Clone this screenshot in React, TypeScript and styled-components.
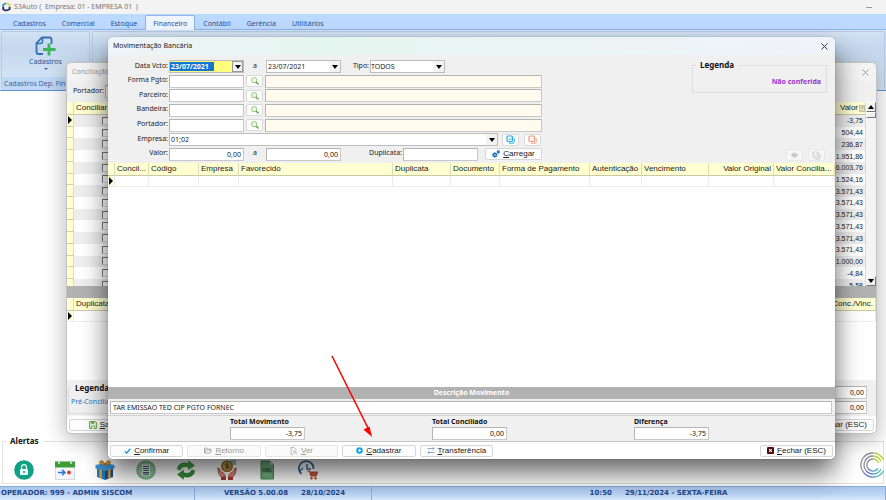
import React from "react";
import styled, { createGlobalStyle } from "styled-components";

const tahoma = `"Noto Sans", "Open Sans", sans-serif`;
const verdana = `"DejaVu Sans", sans-serif`;
const arial = `"Liberation Sans", Arial, sans-serif`;

const Global = createGlobalStyle`
  *, *::before, *::after { box-sizing: border-box; }
  body { margin: 0; background: #fff; font-family: ${tahoma}; font-size: 7px; line-height: 10px; color: #222; }
  button, input, select { font: inherit; color: inherit; margin: 0; padding: 0; }
  svg { display: block; flex: none; }
`;

const Desktop = styled.div`
  position: relative;
  min-height: 100vh;
  display: flex;
  flex-direction: column;
  overflow: hidden;
`;

/* ---------- main application frame ---------- */
const AppTitle = styled.header`
  display: flex;
  align-items: center;
  gap: 3px;
  height: 14px;
  padding: 0 14px 0 2px;
  background: #f3f3f3;
  color: #777;
  white-space: pre;
`;
const MinimizeMark = styled.button`
  margin-left: auto;
  width: 6px;
  height: 1px;
  border: 0;
  background: #999;
`;
const TabBar = styled.nav`
  display: flex;
  height: 16px;
  background: #bcd9ff;
  padding: 1px 0 0 5px;
  border-bottom: 1px solid #8fb5e6;
`;
const Tab = styled.a<{ $active?: boolean }>`
  height: 15px;
  line-height: 15px;
  padding: 0 7px;
  color: #2f4f8a;
  text-decoration: none;
  border: 1px solid ${(p) => (p.$active ? "#8fb5e6" : "transparent")};
  border-bottom: 0;
  border-radius: 2px 2px 0 0;
  background: ${(p) => (p.$active ? "#eef5ff" : "transparent")};
`;
const Ribbon = styled.section`
  display: flex;
  gap: 2px;
  height: 61px;
  padding: 1px 1px 0;
  background: linear-gradient(#d5e3f4, #c5d8ee 30%, #cfe1f4 70%, #d9e9f9);
  border-bottom: 1px solid #5f93d4;
`;
const RibbonGroup = styled.div<{ $wide?: boolean }>`
  display: flex;
  flex-direction: column;
  flex: ${(p) => (p.$wide ? "1" : "0 0 89px")};
  border: 1px solid #b4cae6;
  border-bottom: 0;
  border-radius: 2px;
  color: #2f4f8a;
  overflow: hidden;
`;
const RibbonButton = styled.button`
  display: flex;
  flex-direction: column;
  align-items: center;
  gap: 1px;
  flex: 1;
  padding: 4px 0 0;
  border: 0;
  background: transparent;
`;
const RibbonCaption = styled.div`
  padding: 0 2px;
  height: 13px;
  line-height: 13px;
  background: #bed8f5;
  white-space: nowrap;
  color: #3f66a6;
`;
const Workspace = styled.main`
  flex: 1;
`;
const AlertBox = styled.fieldset`
  margin: 0 2px 2px;
  padding: 4px 0 3px 3px;
  height: 48px;
  border: 1px solid #e2e2e2;
  display: flex;
  justify-content: space-between;
`;
const BoldLegend = styled.legend`
  font: bold 8px/10px ${tahoma};
  color: #111;
  padding: 0 4px;
`;
const AlertList = styled.div`
  display: flex;
  flex: 0 0 312px;
  justify-content: space-between;
  align-items: center;
  padding: 10px 0 0 8px;
`;
const AlertButton = styled.button`
  width: 20px;
  height: 20px;
  border: 0;
  background: transparent;
`;
const BrandMark = styled.div`
  padding-top: 2px;
  margin-right: -3px;
`;
const StatusBar = styled.footer`
  display: grid;
  grid-template-columns: 22fr 20fr 58fr;
  height: 14px;
  border-top: 1px solid #8aa9d3;
  background: linear-gradient(#a9c6ef, #b9d3f5 50%, #d8e8fb);
  color: #1e4689;
  font: bold 7px/13px ${verdana};
`;
const StatusCell = styled.div<{ $align?: string }>`
  display: flex;
  gap: 13px;
  justify-content: ${(p) => p.$align || "flex-start"};
  padding: ${(p) => (p.$align === "center" ? "0 0 0 60px" : "0 26px 0 1px")};
  border-right: 1px solid #90acd6;
  white-space: nowrap;
`;

/* ---------- windows ---------- */
const BackWindow = styled.section`
  position: absolute;
  left: 66px;
  right: 9px;
  top: 62px;
  bottom: 66px;
  display: flex;
  flex-direction: column;
  background: #f0f0f0;
  border: 1px solid #c4c4c4;
  border-radius: 5px;
  overflow: hidden;
  box-shadow: 0 6px 22px rgba(0, 0, 0, 0.3);
`;
const FrontWindow = styled.section`
  position: absolute;
  left: 108px;
  right: 51px;
  top: 37px;
  bottom: 41px;
  display: flex;
  flex-direction: column;
  background: #f0f0f0;
  border-radius: 5px;
  box-shadow: 0 0 1px rgba(0, 0, 0, 0.6), 0 14px 26px rgba(0, 0, 0, 0.6);
`;
const WindowTitle = styled.header<{ $muted?: boolean }>`
  display: flex;
  align-items: center;
  justify-content: space-between;
  flex: none;
  height: 18px;
  padding: 0 7px 0 5px;
  border-radius: 5px 5px 0 0;
  background: ${(p) => (p.$muted ? "#f3f3f3" : "linear-gradient(90deg, #eff4f8, #e5f5ef 30%, #eaf4f4 60%, #f0f3f9)")};
  color: ${(p) => (p.$muted ? "#999" : "#222")};
`;
const CloseButton = styled.button`
  width: 7px;
  height: 7px;
  border: 0;
  background: transparent;
`;

/* ---------- form ---------- */
const FormArea = styled.div`
  display: flex;
  flex: none;
  justify-content: space-between;
  height: 108px;
  padding: 5px 8px 2px 0;
`;
const Fields = styled.div`
  flex: 0 1 434px;
  display: flex;
  flex-direction: column;
  justify-content: space-between;
`;
const FieldRow = styled.div`
  display: flex;
  align-items: center;
  height: 13px;
`;
const Label = styled.label<{ $w: number }>`
  flex: 0 0 ${(p) => p.$w}px;
  padding-right: 1px;
  text-align: right;
  white-space: nowrap;
  height: 12px;
`;
const Between = styled.span`
  flex: 0 0 22px;
  text-align: center;
  height: 12px;
`;
const TextBox = styled.input<{ $grow?: boolean; $tint?: boolean; $num?: boolean }>`
  flex: ${(p) => (p.$grow ? "1 1 0" : "0 0 75px")};
  min-width: 0;
  width: 75px;
  height: 13px;
  padding: 0 2px;
  border: 1px solid #bdbdbd;
  border-color: #b4b4b4 #c8c8c8 #c8c8c8 #b4b4b4;
  border-radius: 0;
  background: ${(p) => (p.$tint ? "#fffbee" : "#fff")};
  text-align: ${(p) => (p.$num ? "right" : "left")};
`;
const Combo = styled.div<{ $grow?: boolean; $focus?: boolean }>`
  display: flex;
  align-items: center;
  flex: ${(p) => (p.$grow ? "1 1 0" : "0 0 75px")};
  height: 13px;
  border: 1px solid #bdbdbd;
  background: ${(p) => (p.$focus ? "#ffff7d" : "#fff")};
`;
const ComboInput = styled.input<{ $selected?: boolean }>`
  flex: ${(p) => (p.$selected ? "0 0 44px" : "1 1 0")};
  min-width: 0;
  width: 44px;
  height: 9px;
  border: 0;
  padding-left: 1px;
  background: ${(p) => (p.$selected ? "#1377d3" : "transparent")};
  color: ${(p) => (p.$selected ? "#fff" : "#222")};
  font-weight: ${(p) => (p.$selected ? "bold" : "normal")};
  outline: 0;
`;
const ComboSelect = styled.select`
  appearance: none;
  flex: 1;
  min-width: 0;
  height: 11px;
  border: 0;
  background: transparent;
`;
const DropButton = styled.button<{ $framed?: boolean }>`
  display: grid;
  place-items: center;
  width: 11px;
  height: 11px;
  margin-left: auto;
  border: ${(p) => (p.$framed ? "1px solid #999" : "0")};
  background: #f3f3f3;
`;
const DropMark = styled.span`
  display: grid;
  place-items: center;
  width: 11px;
  height: 11px;
  background: #f3f3f3;
  pointer-events: none;
`;
const SmallButton = styled.button<{ $gap?: number }>`
  display: grid;
  place-items: center;
  flex: 0 0 17px;
  height: 12px;
  margin: 0 ${(p) => p.$gap ?? 2}px;
  border: 1px solid #dadada;
  border-radius: 2px;
  background: #fdfdfd;
  &:disabled { border-color: #e8e8e8; background: #f6f6f6; }
`;
const ActionButton = styled.button<{ $w?: number }>`
  display: flex;
  align-items: center;
  justify-content: center;
  gap: 3px;
  flex: ${(p) => (p.$w ? `0 0 ${p.$w}px` : "1 1 0")};
  height: 12px;
  border: 1px solid #d6d6d6;
  border-radius: 2px;
  background: #fdfdfd;
  font: 8px/10px ${arial};
  color: #222;
  white-space: nowrap;
  &:disabled { color: #999; border-color: #e6e6e6; background: #fafafa; }
`;
const LoadButton = styled(ActionButton)`
  margin-left: auto;
`;
const SidePanel = styled.div`
  display: flex;
  flex-direction: column;
  justify-content: space-between;
  flex: 0 0 135px;
`;
const LegendBox = styled.fieldset`
  margin: 0;
  padding: 7px 5px 0 3px;
  height: 33px;
  border: 1px solid #dedede;
`;
const LegendItem = styled.div`
  text-align: right;
  font-weight: bold;
  color: #9a30cf;
`;
const SideButtons = styled.div`
  display: flex;
  justify-content: flex-end;
  gap: 1px;
`;

/* ---------- grids ---------- */
const GridSpace = styled.div`
  flex: 1;
  min-height: 0;
  background: #fff;
`;
const DataGrid = styled.table`
  width: 100%;
  table-layout: fixed;
  border-collapse: separate;
  border-spacing: 0;
  font: 8px/10px ${arial};
`;
const HeadCell = styled.th<{ $right?: boolean }>`
  height: 13px;
  padding: ${(p) => (p.$right ? "0 2px 0 0" : "0 0 0 2px")};
  border-right: 1px solid #dcdcb8;
  border-bottom: 1px solid #c9c9a8;
  background: #ffffd0;
  font-weight: normal;
  text-align: ${(p) => (p.$right ? "right" : "left")};
  white-space: nowrap;
`;
const HeadFlex = styled.span`
  display: flex;
  align-items: center;
  justify-content: flex-end;
  gap: 1px;
`;
const Cell = styled.td<{ $mark?: boolean }>`
  height: 11px;
  padding: 0;
  border-right: 1px solid #ececec;
  border-bottom: 1px solid #ececec;
  background: ${(p) => (p.$mark ? "#ffffe0" : "transparent")};
`;
const Band = styled.div`
  flex: none;
  height: 12px;
  line-height: 12px;
  background: #b2b2b2;
  color: #fff;
  text-align: center;
  font-weight: bold;
`;
const Description = styled.div`
  display: flex;
  flex: none;
  padding: 2px 3px 1px 2px;
  border-bottom: 1px solid #d2d2d2;
`;
const Totals = styled.div`
  display: flex;
  flex: none;
  justify-content: center;
  gap: 127px;
  height: 26px;
  padding: 1px 4px 0 0;
  border-bottom: 1px solid #c6c6c6;
`;
const Total = styled.label`
  display: flex;
  flex-direction: column;
  flex: 0 0 75px;
  white-space: nowrap;
  font-weight: bold;
  color: #111;
  input { flex: none; font-weight: normal; }
`;
const Actions = styled.footer`
  display: flex;
  align-items: center;
  justify-content: space-between;
  flex: none;
  height: 17px;
  padding: 0 2px;
  background: #fff;
  border-radius: 0 0 5px 5px;
`;
const ActionGroup = styled.div`
  display: flex;
  flex: 0 0 383px;
  gap: 4px;
`;
const Pointer = styled.svg`
  position: absolute;
  left: 220px;
  bottom: 20px;
  pointer-events: none;
`;

/* ---------- back window parts ---------- */
const HolderRow = styled.div`
  display: flex;
  align-items: center;
  flex: none;
  height: 21px;
  padding-left: 3px;
`;
const ScrollPane = styled.div`
  display: flex;
  flex: 0 0 184px;
  overflow: hidden;
  align-items: stretch;
  background: #fff;
`;
const EntryTable = styled(DataGrid)`
  height: 189px;
  font-size: 7px;
  thead { font-size: 8px; }
`;
const EntryCell = styled.td<{ $odd?: boolean; $mark?: boolean }>`
  padding: 0 2px 0 0;
  line-height: 9px;
  text-align: right;
  border-right: 1px solid #d8d8d8;
  border-bottom: ${(p) => (p.$mark ? "1px solid #cfcfb0" : "0")};
  background: ${(p) => (p.$mark ? "#ffffd0" : p.$odd ? "#eeeeee" : "#fff")};
`;
const Check = styled.input`
  appearance: none;
  display: block;
  width: 8px;
  height: 8px;
  margin-left: 28px;
  border: 1px solid #777;
  border-right-color: #ddd;
  border-bottom-color: #ddd;
  background: #fff;
`;
const ScrollBar = styled.div`
  display: flex;
  flex-direction: column;
  justify-content: space-between;
  flex: 0 0 10px;
  background: #f4f4f4;
`;
const ScrollButton = styled.button`
  display: grid;
  place-items: center;
  width: 10px;
  height: 10px;
  border: 1px solid #fff;
  border-right-color: #777;
  border-bottom-color: #777;
  background: #f0f0f0;
`;
const ScrollThumb = styled(ScrollButton)`
  height: 6px;
`;
const BackFoot = styled.div`
  display: flex;
  flex: none;
  justify-content: space-between;
  height: 36px;
  padding: 3px 9px 2px 1px;
`;
const BackLegend = styled.fieldset`
  flex: 0 0 200px;
  margin: 0;
  padding: 4px 2px;
  border: 1px solid #dcdcdc;
  color: #2a74cf;
`;
const BackTotals = styled.div`
  display: flex;
  flex-direction: column;
  justify-content: flex-end;
  gap: 2px;
  input { flex: none; }
`;

/* ---------- icons ---------- */
const Caret = ({ up }: { up?: boolean }) => (
  <svg width="6" height="4" viewBox="0 0 6 4">
    <path d={up ? "M0 4h6L3 0z" : "M0 0h6L3 4z"} fill="#000" />
  </svg>
);
const MenuCaret = () => (
  <svg width="4" height="2" viewBox="0 0 4 2">
    <path d="M0 0h4L2 2z" fill="#3f66a6" />
  </svg>
);
const FilterMark = () => (
  <svg width="6" height="7" viewBox="0 0 6 7">
    <rect x=".5" y=".5" width="5" height="6" fill="#ece9c4" stroke="#c4c19c" />
    <path d="M1.500 2h3L3 3.800V5.500" fill="none" stroke="#a19e7c" strokeWidth=".8" />
  </svg>
);
const RowMark = () => (
  <svg width="5" height="8" viewBox="0 0 5 8">
    <path d="M1 0l4 4-4 4z" fill="#000" />
  </svg>
);
const Cross = ({ color }: { color: string }) => (
  <svg width="7" height="7" viewBox="0 0 7 7">
    <path d="M.5 .5l6 6M6.500 .5l-6 6" stroke={color} strokeWidth="1" />
  </svg>
);
const Search = () => (
  <svg width="8" height="8" viewBox="0 0 8 8" fill="none">
    <circle cx="3.200" cy="3.200" r="2.600" fill="#eef9e8" stroke="#8cc97a" strokeWidth="1" />
    <path d="M5 5l2.500 2.500" stroke="#5aa548" strokeWidth="1.400" />
  </svg>
);
const Copies = ({ color, tick }: { color: string; tick?: boolean }) => (
  <svg width="9" height="9" viewBox="0 0 9 9" fill="none" stroke={color}>
    <rect x="1" y="1" width="5.500" height="5.500" rx="1" strokeWidth="1.200" />
    <path d="M3 8.200h4.200a1 1 0 0 0 1-1V3" strokeWidth="1" />
    {tick && <path d="M2.500 3.800l1.200 1.200 2-2.400" strokeWidth="1" />}
  </svg>
);
const Gears = () => (
  <svg width="8" height="8" viewBox="0 0 8 8" fill="none" stroke="#2372b8">
    <circle cx="2.800" cy="5" r="1.700" strokeWidth="1.500" />
    <circle cx="6.300" cy="1.900" r="1" strokeWidth="1.100" />
    <path d="M2.800 2.300v5.400M.1 5h5.400M6.300 0v3.800" strokeWidth=".5" />
  </svg>
);
const Bug = () => (
  <svg width="9" height="8" viewBox="0 0 9 8">
    <path d="M1 4q3.500-5 7 0q-3.500 5-7 0z" fill="#c2c2c2" />
    <circle cx="4.500" cy="4" r="1.500" fill="#e6e6e6" />
    <circle cx="4.500" cy="4" r=".8" fill="#999" />
  </svg>
);
const Tick = () => (
  <svg width="7" height="6" viewBox="0 0 7 6">
    <path d="M.8 3.200l1.800 1.900L6.300.8" fill="none" stroke="#159be8" strokeWidth="1.400" />
  </svg>
);
const Folder = () => (
  <svg width="8" height="7" viewBox="0 0 8 7">
    <path d="M.5 6V1h2l.8 1h3v1M.5 6l1.400-3h5.600L6.200 6z" fill="none" stroke="#999" strokeWidth=".8" />
  </svg>
);
const PageFind = () => (
  <svg width="8" height="8" viewBox="0 0 8 8" fill="none" stroke="#aaa" strokeWidth=".8">
    <path d="M3 7.500H1V.5h3l2 2v1" />
    <circle cx="4.700" cy="5" r="1.300" />
    <path d="M5.700 6l1.600 1.600" />
  </svg>
);
const Plus = () => (
  <svg width="7" height="7" viewBox="0 0 7 7">
    <circle cx="3.500" cy="3.500" r="3.300" fill="#1aa3ea" />
    <path d="M3.500 2v3M2 3.500h3" stroke="#fff" strokeWidth="1.200" />
  </svg>
);
const Swap = () => (
  <svg width="8" height="7" viewBox="0 0 8 7">
    <path d="M.5 1.500h6.500M5.500 0l1.700 1.500L5.500 3M7.500 5.500H1M2.500 4L.8 5.500 2.500 7" fill="none" stroke="#6f93c8" strokeWidth=".8" />
  </svg>
);
const Exit = () => (
  <svg width="7" height="7" viewBox="0 0 7 7">
    <rect width="7" height="7" rx="1" fill="#4e0b0e" />
    <path d="M2.200 2.200l2.600 2.600M4.800 2.200L2.200 4.800" stroke="#fff" strokeWidth="1.100" />
  </svg>
);
const Disk = () => (
  <svg width="8" height="8" viewBox="0 0 8 8">
    <path d="M.6.6h6l.8.8v6H.6z" fill="#e9f6e2" stroke="#5ba544" strokeWidth="1" />
    <path d="M2.200.6h3v2.200h-3zM2 4.800h4v2.600H2z" fill="#5ba544" />
    <path d="M2.700 5.400h2.600v2H2.700z" fill="#fff" />
  </svg>
);
const AppIcon = () => (
  <svg width="9" height="10" viewBox="0 0 9 10" fill="none" strokeWidth="1.800">
    <path d="M4 1.200L1.200 2.800V5" stroke="#2f8fd6" />
    <path d="M1.200 5v2.200L4 8.800" stroke="#1d3563" />
    <path d="M4 8.800l3.600-1.600V5" stroke="#1d3563" />
    <path d="M7.600 5V2.800L4.600 1.200" stroke="#e0cf3a" />
  </svg>
);
const AddFile = () => (
  <svg width="21" height="20" viewBox="0 0 21 20" fill="none">
    <path d="M8 18H3.500Q1.500 18 1.500 16V7L7 1.500h7.500q2 0 2 2V8" stroke="#3472b5" strokeWidth="1.800" />
    <path d="M1.500 7.500H5.500Q7.500 7.500 7.500 5.500V1.500" stroke="#3472b5" strokeWidth="1.500" />
    <path d="M14 7.500v12M8 13.500h12.500" stroke="#3fb55d" strokeWidth="2.800" />
  </svg>
);
const LockIcon = () => (
  <svg width="20" height="20" viewBox="0 0 20 20">
    <circle cx="10" cy="10" r="9.800" fill="#12a085" />
    <rect x="6" y="9" width="8" height="6" rx="1" fill="#e8fbf6" />
    <path d="M7.600 9V7a2.400 2.400 0 0 1 4.800 0v2" fill="none" stroke="#e8fbf6" strokeWidth="1.300" />
    <circle cx="10" cy="12" r="1" fill="#12a085" />
  </svg>
);
const CalendarIcon = () => (
  <svg width="20" height="20" viewBox="0 0 20 20">
    <rect x=".5" y="2" width="19" height="17.500" fill="#f4f6fa" stroke="#d4dae4" />
    <path d="M0 1.500h20v6H0z" fill="#3f9c38" />
    <path d="M4 0v4M16 0v4" stroke="#d8ecd6" strokeWidth="1.500" />
    <path d="M3 12.500h6M7 9.800l3 2.700-3 2.700" fill="none" stroke="#2878cf" strokeWidth="1.500" />
    <circle cx="14" cy="12.500" r="2" fill="#e13b38" />
  </svg>
);
const GiftIcon = () => (
  <svg width="20" height="20" viewBox="0 0 20 20">
    <path d="M2 8l8 2v10l-8-3z" fill="#2676b8" />
    <path d="M10 10l8-2v9l-8 3z" fill="#174f86" />
    <path d="M.5 5L10 3l9.500 2v3.500L10 11 .5 8.500z" fill="#3b93d6" />
    <path d="M4.500 9l2.300.6v9.200L4.500 18zM13.200 9.600l2.300-.6v9l-2.300.8z" fill="#d9a53c" />
    <path d="M10 5C6 5 3 3.500 5 1.200S9.500 2 10 5c.5-3 3-6 5-3.800S14 5 10 5z" fill="#d08f2c" stroke="#8b5a15" strokeWidth=".5" />
  </svg>
);
const ListIcon = () => (
  <svg width="20" height="20" viewBox="0 0 20 20">
    <circle cx="10" cy="10" r="9.800" fill="#7bb58b" />
    <circle cx="10" cy="10" r="7.800" fill="#93c7a0" />
    <rect x="6" y="4.500" width="8" height="11" fill="#e5efe8" />
    <path d="M7 6.500h6M7 8.500h6M7 10.500h6M7 12.500h6M7 14.200h6" stroke="#44556b" strokeWidth="1.200" />
  </svg>
);
const RecycleIcon = () => (
  <svg width="20" height="20" viewBox="0 0 20 20">
    <path d="M1.500 9.500C1 4.500 7 1.500 12.500 3.500V.8L18.500 5.500l-6 4.300V7.200C8.500 6 5 7 4.500 10z" fill="#44a548" stroke="#2d7d32" strokeWidth=".5" />
    <path d="M18.500 10.500c.5 5-5.500 8-11 6v2.700L1.500 14.500l6-4.300v2.600c4 1.200 7.500.2 8-2.800z" fill="#339239" stroke="#256c2a" strokeWidth=".5" />
  </svg>
);
const HandsIcon = () => (
  <svg width="20" height="20" viewBox="0 0 20 20">
    <path d="M13 0h6v5h-6z" fill="#8fc0d0" />
    <circle cx="10" cy="6.200" r="6" fill="#8c6e33" />
    <circle cx="10" cy="6.200" r="4.500" fill="#c29b49" />
    <path d="M11.500 4.500q-3-1.200-3 .4t3 1.700-3 1.500M10 3v6.500" fill="none" stroke="#5c4518" strokeWidth=".9" />
    <path d="M.8 8q2-.5 2.200 3l3.500 2q2 1.500 2 4H4.500Q1 15 .8 8zM19.200 8q-2-.5-2.200 3l-3.500 2q-2 1.500-2 4h4Q19 15 19.200 8z" fill="#e08b7b" stroke="#9e3f36" strokeWidth=".8" />
    <path d="M4 17h5v3H4zM11 17h5v3h-5z" fill="#a63a38" />
  </svg>
);
const XmlIcon = () => (
  <svg width="20" height="20" viewBox="0 0 20 20">
    <path d="M4 1h9l3.500 3.500V19H4z" fill="#6fae79" stroke="#448752" />
    <path d="M13 1v3.500h3.500z" fill="#b9dcbf" />
    <text x="10.200" y="12" fontSize="5" fontWeight="bold" textAnchor="middle" fill="#1e5a2c" fontFamily="Liberation Sans, sans-serif">XML</text>
    <path d="M6 14.500h8" stroke="#8cc795" />
  </svg>
);
const ClockIcon = () => (
  <svg width="20" height="20" viewBox="0 0 20 20" fill="none">
    <path d="M3.500 14A7.300 7.300 0 1 1 15.500 9" stroke="#33699f" strokeWidth="1.700" />
    <path d="M0 7.500l2 3.500 3-3" stroke="#33699f" strokeWidth="1.300" />
    <path d="M9 4v5h4" stroke="#33699f" strokeWidth="1.400" />
    <path d="M9.500 11h2l1.500 5h5l1.500-4h-7" fill="#c95b3b" stroke="#b54a2c" strokeWidth="1.200" />
    <circle cx="13.500" cy="18.300" r="1.200" fill="#b54a2c" />
    <circle cx="17.500" cy="18.300" r="1.200" fill="#b54a2c" />
  </svg>
);
const BrandIcon = () => (
  <svg width="26" height="26" viewBox="0 0 26 26" fill="none" strokeWidth="1.300">
    <path d="M13 1A12 12 0 0 0 4 21M13 4A9 9 0 0 0 6 18.500M13 7a6 6 0 0 0-5 9.500" stroke="#8b9299" />
    <path d="M13 1a12 12 0 0 1 10.500 7M13 4a9 9 0 0 1 8 5.500M13 7a6 6 0 0 1 5.500 4" stroke="#b9cf3f" />
    <path d="M4 21a12 12 0 0 0 10 4M6 18.500a9 9 0 0 0 7.500 3.500M8 16.500a6 6 0 0 0 5.500 2.500" stroke="#6f7fc0" />
    <path d="M14 25a12 12 0 0 0 9.500-6M13.500 22a9 9 0 0 0 7.500-5M13.500 19a6 6 0 0 0 4.500-2.500" stroke="#4fb5b5" />
  </svg>
);

/* ---------- data ---------- */
const tabs = ["Cadastros", "Comercial", "Estoque", "Financeiro", "Contábil", "Gerência", "Utilitários"];
const amounts = [
  "-3,75", "504,44", "236,87", "1.951,86", "6.003,76", "1.524,16", "3.571,43", "3.571,43",
  "3.571,43", "3.571,43", "3.571,43", "3.571,43", "1.000,00", "-4,84", "-5,58",
];
const columns: { name: string; width?: number; right?: boolean }[] = [
  { name: "Concil...", width: 34 },
  { name: "Código", width: 50 },
  { name: "Empresa", width: 40 },
  { name: "Favorecido" },
  { name: "Duplicata", width: 58 },
  { name: "Documento", width: 49 },
  { name: "Forma de Pagamento", width: 90 },
  { name: "Autenticação", width: 52 },
  { name: "Vencimento", width: 67 },
  { name: "Valor Original", width: 65, right: true },
  { name: "Valor Concilia...", width: 61 },
];
const lookups = ["Forma Pgto:", "Parceiro:", "Bandeira:", "Portador:"];
const alerts = [
  { name: "Bloqueio", Icon: LockIcon },
  { name: "Agenda", Icon: CalendarIcon },
  { name: "Aniversários", Icon: GiftIcon },
  { name: "Pedidos", Icon: ListIcon },
  { name: "Atualizar", Icon: RecycleIcon },
  { name: "Recebimentos", Icon: HandsIcon },
  { name: "XML", Icon: XmlIcon },
  { name: "Compras", Icon: ClockIcon },
];

function Conciliation() {
  return (
    <BackWindow aria-label="Conciliação">
      <WindowTitle $muted>
        Conciliação
        <CloseButton aria-label="Fechar janela"><Cross color="#999" /></CloseButton>
      </WindowTitle>
      <HolderRow>
        <Label $w={35} htmlFor="holder">Portador:</Label>
        <TextBox id="holder" $tint />
      </HolderRow>
      <ScrollPane>
        <EntryTable>
          <colgroup><col width="7" /><col width="60" /><col /><col width="60" /></colgroup>
          <thead>
            <tr>
              <HeadCell />
              <HeadCell>Conciliar</HeadCell>
              <HeadCell />
              <HeadCell><HeadFlex>Valor<FilterMark /></HeadFlex></HeadCell>
            </tr>
          </thead>
          <tbody>
            {amounts.map((value, i) => (
              <tr key={i}>
                <EntryCell $mark>{i === 0 && <RowMark />}</EntryCell>
                <EntryCell $odd={i % 2 === 0}><Check type="checkbox" aria-label={`Conciliar ${value}`} /></EntryCell>
                <EntryCell $odd={i % 2 === 0} />
                <EntryCell $odd={i % 2 === 0}>{value}</EntryCell>
              </tr>
            ))}
          </tbody>
        </EntryTable>
        <ScrollBar>
          <div>
            <ScrollButton aria-label="Subir"><Caret up /></ScrollButton>
            <ScrollThumb aria-label="Posição" />
          </div>
          <ScrollButton aria-label="Descer"><Caret /></ScrollButton>
        </ScrollBar>
      </ScrollPane>
      <Band />
      <GridSpace>
        <DataGrid>
          <colgroup><col width="7" /><col width="60" /><col /><col width="60" /></colgroup>
          <thead>
            <tr><HeadCell /><HeadCell>Duplicata</HeadCell><HeadCell /><HeadCell $right>Conc./Vinc.</HeadCell></tr>
          </thead>
          <tbody><tr><Cell $mark><RowMark /></Cell><Cell /><Cell /><Cell /></tr></tbody>
        </DataGrid>
      </GridSpace>
      <BackFoot>
        <BackLegend><BoldLegend>Legenda</BoldLegend>Pré-Conciliado</BackLegend>
        <BackTotals>
          <TextBox $num aria-label="Total" defaultValue="0,00" />
          <TextBox $num aria-label="Saldo" defaultValue="0,00" />
        </BackTotals>
      </BackFoot>
      <Actions>
        <ActionButton $w={73}><Disk /><span><u>S</u>alvar</span></ActionButton>
        <ActionButton $w={73}><Exit /><span><u>F</u>echar (ESC)</span></ActionButton>
      </Actions>
    </BackWindow>
  );
}

function BankMovement() {
  return (
    <FrontWindow aria-label="Movimentação Bancária">
      <WindowTitle>
        Movimentação Bancária
        <CloseButton aria-label="Fechar janela"><Cross color="#333" /></CloseButton>
      </WindowTitle>
      <FormArea>
        <Fields>
          <FieldRow>
            <Label $w={61} htmlFor="from">Data Vcto:</Label>
            <Combo $focus>
              <ComboInput $selected id="from" defaultValue="23/07/2021" />
              <DropButton $framed aria-label="Abrir calendário inicial"><Caret /></DropButton>
            </Combo>
            <Between>a</Between>
            <Combo>
              <ComboInput aria-label="Data final" defaultValue="23/07/2021" />
              <DropButton aria-label="Abrir calendário final"><Caret /></DropButton>
            </Combo>
            <Label $w={29} htmlFor="kind">Tipo:</Label>
            <Combo>
              <ComboSelect id="kind"><option>TODOS</option></ComboSelect>
              <DropMark><Caret /></DropMark>
            </Combo>
          </FieldRow>
          {lookups.map((text) => (
            <FieldRow key={text}>
              <Label $w={61} htmlFor={text}>{text}</Label>
              <TextBox id={text} />
              <SmallButton aria-label={`Pesquisar ${text}`}><Search /></SmallButton>
              <TextBox $grow $tint readOnly aria-label={`Descrição ${text}`} />
            </FieldRow>
          ))}
          <FieldRow>
            <Label $w={61} htmlFor="company">Empresa:</Label>
            <Combo $grow>
              <ComboInput id="company" defaultValue="01;02" />
              <DropButton aria-label="Escolher empresa"><Caret /></DropButton>
            </Combo>
            <SmallButton $gap={4} aria-label="Marcar todas"><Copies color="#35a8e8" tick /></SmallButton>
            <SmallButton $gap={1} aria-label="Desmarcar todas"><Copies color="#f59a7c" /></SmallButton>
          </FieldRow>
          <FieldRow>
            <Label $w={61} htmlFor="min">Valor:</Label>
            <TextBox id="min" $num defaultValue="0,00" />
            <Between>a</Between>
            <TextBox $num aria-label="Valor final" defaultValue="0,00" />
            <Label $w={62} htmlFor="dup">Duplicata:</Label>
            <TextBox id="dup" />
            <LoadButton $w={57}><Gears /><span><u>C</u>arregar</span></LoadButton>
          </FieldRow>
        </Fields>
        <SidePanel>
          <LegendBox>
            <BoldLegend>Legenda</BoldLegend>
            <LegendItem>Não conferida</LegendItem>
          </LegendBox>
          <SideButtons>
            <SmallButton disabled aria-label="Visualizar"><Bug /></SmallButton>
            <SmallButton disabled aria-label="Marcar"><Copies color="#cfcfcf" tick /></SmallButton>
          </SideButtons>
        </SidePanel>
      </FormArea>
      <GridSpace>
        <DataGrid>
          <colgroup>
            <col width="7" />
            {columns.map((c) => <col key={c.name} width={c.width} />)}
          </colgroup>
          <thead>
            <tr>
              <HeadCell />
              {columns.map((c) => <HeadCell key={c.name} $right={c.right}>{c.name}</HeadCell>)}
            </tr>
          </thead>
          <tbody>
            <tr><Cell $mark><RowMark /></Cell>{columns.map((c) => <Cell key={c.name} />)}</tr>
          </tbody>
        </DataGrid>
      </GridSpace>
      <Band>Descrição Movimento</Band>
      <Description>
        <TextBox $grow aria-label="Descrição Movimento" defaultValue="TAR EMISSAO TED CIP PGTO FORNEC" />
      </Description>
      <Totals>
        <Total>Total Movimento<TextBox $num defaultValue="-3,75" /></Total>
        <Total>Total Conciliado<TextBox $num defaultValue="0,00" /></Total>
        <Total>Diferença<TextBox $num defaultValue="-3,75" /></Total>
      </Totals>
      <Actions>
        <ActionGroup>
          <ActionButton><Tick /><span><u>C</u>onfirmar</span></ActionButton>
          <ActionButton disabled><Folder /><span><u>R</u>etorno</span></ActionButton>
          <ActionButton disabled><PageFind /><span><u>V</u>er</span></ActionButton>
          <ActionButton><Plus /><span><u>C</u>adastrar</span></ActionButton>
          <ActionButton><Swap /><span><u>T</u>ransferência</span></ActionButton>
        </ActionGroup>
        <ActionButton $w={73}><Exit /><span><u>F</u>echar (ESC)</span></ActionButton>
      </Actions>
      <Pointer width="48" height="86" viewBox="0 0 48 86">
        <path d="M4 3L40 75" stroke="#f00" strokeWidth="1.500" />
        <path d="M44 84L35.500 76.500L41.500 73.500z" fill="#f00" />
      </Pointer>
    </FrontWindow>
  );
}

export default function App() {
  return (
    <>
      <Global />
      <Desktop>
        <AppTitle>
          <AppIcon />
          S3Auto (  Empresa: 01 - EMPRESA 01  )
          <MinimizeMark aria-label="Minimizar" />
        </AppTitle>
        <TabBar>
          {tabs.map((t) => <Tab key={t} href="#" $active={t === "Financeiro"}>{t}</Tab>)}
        </TabBar>
        <Ribbon>
          <RibbonGroup>
            <RibbonButton><AddFile />Cadastros<MenuCaret /></RibbonButton>
            <RibbonCaption>Cadastros Dep. Fina</RibbonCaption>
          </RibbonGroup>
          <RibbonGroup $wide />
        </Ribbon>
        <Workspace />
        <AlertBox>
          <BoldLegend>Alertas</BoldLegend>
          <AlertList>
            {alerts.map(({ name, Icon }) => <AlertButton key={name} aria-label={name}><Icon /></AlertButton>)}
          </AlertList>
          <BrandMark><BrandIcon /></BrandMark>
        </AlertBox>
        <StatusBar>
          <StatusCell>OPERADOR: 999 - ADMIN SISCOM</StatusCell>
          <StatusCell $align="flex-end"><span>VERSÃO 5.00.08</span><span>28/10/2024</span></StatusCell>
          <StatusCell $align="center"><span>10:50</span><span>29/11/2024 - SEXTA-FEIRA</span></StatusCell>
        </StatusBar>
        <Conciliation />
        <BankMovement />
      </Desktop>
    </>
  );
}
